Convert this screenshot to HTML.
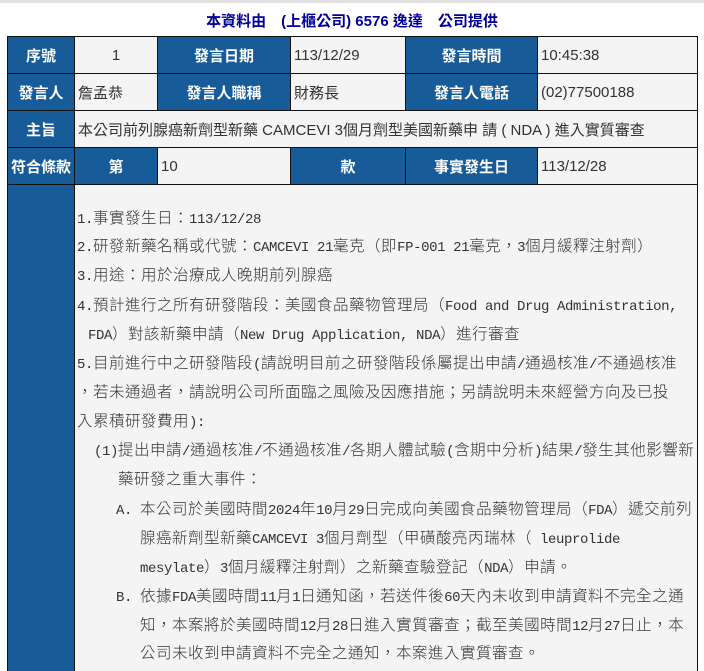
<!DOCTYPE html>
<html><head><meta charset="utf-8"><style>
html,body{margin:0;padding:0;background:#fff;width:704px;height:671px;overflow:hidden;position:relative;font-family:"Liberation Sans","Noto Sans CJK TC",sans-serif;}
.topbar{position:absolute;left:0;top:0;width:704px;height:3px;background:#e2e2e2;}
.title{position:absolute;left:0;width:704px;top:10px;text-align:center;font-size:15px;font-weight:bold;color:#000099;}
.c{position:absolute;box-sizing:border-box;border:1px solid #111;display:flex;align-items:center;font-size:15px;}
.h{background:#175b98;color:#fff;font-weight:bold;justify-content:center;}
.d{background:#f4f4f4;color:#333;padding-left:3px;}
.ctr{justify-content:center;padding-left:0;}
.l{position:absolute;white-space:nowrap;font-family:"Noto Sans CJK TC",sans-serif;font-size:15.5px;line-height:29px;color:#333;font-weight:300;letter-spacing:0.5px;}
.m{font-family:"Liberation Mono",monospace;font-size:14px;font-weight:normal;letter-spacing:-0.4px;}
</style></head><body>
<div class="topbar"></div>
<div class="title">本資料由　(上櫃公司) 6576 逸達　公司提供</div>

<div class="c h" style="left:7px;top:36px;width:68px;height:38px">序號</div>
<div class="c d ctr" style="left:74px;top:36px;width:84px;height:38px">1</div>
<div class="c h" style="left:157px;top:36px;width:134px;height:38px">發言日期</div>
<div class="c d" style="left:290px;top:36px;width:116px;height:38px">113/12/29</div>
<div class="c h" style="left:405px;top:36px;width:133px;height:38px">發言時間</div>
<div class="c d" style="left:537px;top:36px;width:161px;height:38px">10:45:38</div>

<div class="c h" style="left:7px;top:73px;width:68px;height:38px">發言人</div>
<div class="c d" style="left:74px;top:73px;width:84px;height:38px">詹孟恭</div>
<div class="c h" style="left:157px;top:73px;width:134px;height:38px">發言人職稱</div>
<div class="c d" style="left:290px;top:73px;width:116px;height:38px">財務長</div>
<div class="c h" style="left:405px;top:73px;width:133px;height:38px">發言人電話</div>
<div class="c d" style="left:537px;top:73px;width:161px;height:38px">(02)77500188</div>

<div class="c h" style="left:7px;top:110px;width:68px;height:38px">主旨</div>
<div class="c d" style="left:74px;top:110px;width:624px;height:38px">本公司前列腺癌新劑型新藥 CAMCEVI 3個月劑型美國新藥申 請 ( NDA ) 進入實質審查</div>

<div class="c h" style="left:7px;top:147px;width:68px;height:38px">符合條款</div>
<div class="c h" style="left:74px;top:147px;width:84px;height:38px">第</div>
<div class="c d" style="left:157px;top:147px;width:134px;height:38px">10</div>
<div class="c h" style="left:290px;top:147px;width:116px;height:38px">款</div>
<div class="c h" style="left:405px;top:147px;width:133px;height:38px">事實發生日</div>
<div class="c d" style="left:537px;top:147px;width:161px;height:38px">113/12/28</div>

<div class="c h" style="left:7px;top:184px;width:68px;height:500px"></div>
<div class="c d" style="left:74px;top:184px;width:624px;height:500px"></div>

<div class="l" style="left:77px;top:203px"><span class="m">1.</span>事實發生日：<span class="m">113/12/28</span></div>
<div class="l" style="left:77px;top:231px"><span class="m">2.</span>研發新藥名稱或代號：<span class="m">CAMCEVI 21</span>毫克（即<span class="m">FP-001 21</span>毫克，<span class="m">3</span>個月緩釋注射劑）</div>
<div class="l" style="left:77px;top:260px"><span class="m">3.</span>用途：用於治療成人晚期前列腺癌</div>
<div class="l" style="left:77px;top:290px"><span class="m">4.</span>預計進行之所有研發階段：美國食品藥物管理局（<span class="m">Food and Drug Administration,</span></div>
<div class="l" style="left:88px;top:319px"><span class="m">FDA</span>）對該新藥申請（<span class="m">New Drug Application, NDA</span>）進行審查</div>
<div class="l" style="left:77px;top:348px"><span class="m">5.</span>目前進行中之研發階段<span class="m">(</span>請說明目前之研發階段係屬提出申請<span class="m">/</span>通過核准<span class="m">/</span>不通過核准</div>
<div class="l" style="left:77px;top:377px">，若未通過者，請說明公司所面臨之風險及因應措施；另請說明未來經營方向及已投</div>
<div class="l" style="left:77px;top:406px">入累積研發費用<span class="m">):</span></div>
<div class="l" style="left:94px;top:435px"><span class="m">(1)</span>提出申請<span class="m">/</span>通過核准<span class="m">/</span>不通過核准<span class="m">/</span>各期人體試驗<span class="m">(</span>含期中分析<span class="m">)</span>結果<span class="m">/</span>發生其他影響新</div>
<div class="l" style="left:118px;top:464px">藥研發之重大事件：</div>
<div class="l" style="left:116px;top:494px"><span class="m">A. </span>本公司於美國時間<span class="m">2024</span>年<span class="m">10</span>月<span class="m">29</span>日完成向美國食品藥物管理局（<span class="m">FDA</span>）遞交前列</div>
<div class="l" style="left:140px;top:523px">腺癌新劑型新藥<span class="m">CAMCEVI 3</span>個月劑型（甲磺酸亮丙瑞林（<span class="m"> leuprolide</span></div>
<div class="l" style="left:140px;top:552px"><span class="m">mesylate</span>）<span class="m">3</span>個月緩釋注射劑）之新藥查驗登記（<span class="m">NDA</span>）申請。</div>
<div class="l" style="left:116px;top:581px"><span class="m">B. </span>依據<span class="m">FDA</span>美國時間<span class="m">11</span>月<span class="m">1</span>日通知函，若送件後<span class="m">60</span>天內未收到申請資料不完全之通</div>
<div class="l" style="left:140px;top:610px">知，本案將於美國時間<span class="m">12</span>月<span class="m">28</span>日進入實質審查；截至美國時間<span class="m">12</span>月<span class="m">27</span>日止，本</div>
<div class="l" style="left:140px;top:638px">公司未收到申請資料不完全之通知，本案進入實質審查。</div>
</body></html>
